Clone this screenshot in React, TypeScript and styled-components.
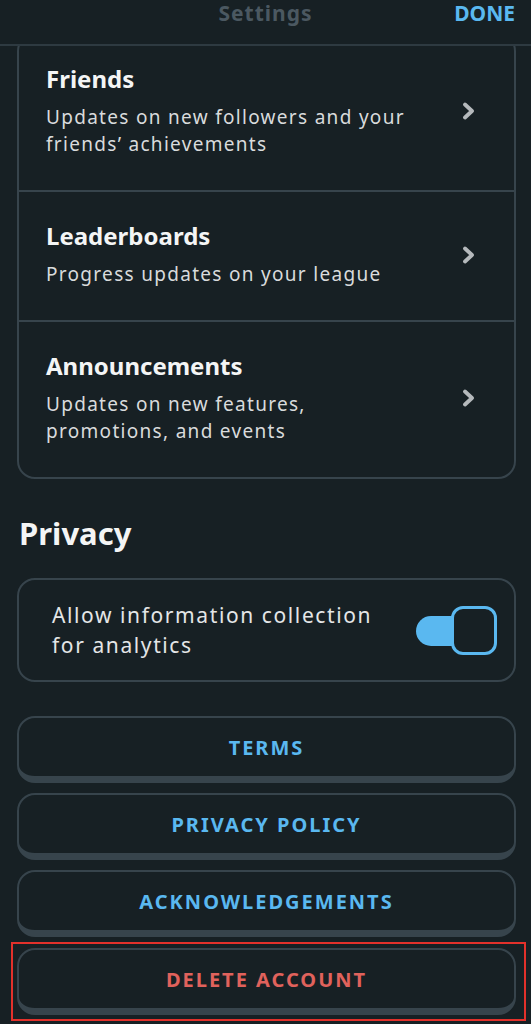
import React from "react";
import styled, { createGlobalStyle } from "styled-components";

const GlobalStyle = createGlobalStyle`
  * { box-sizing: border-box; }
  html, body { margin: 0; padding: 0; background: #172024; }
  body { font-family: "Noto Sans", "Open Sans", sans-serif; color: #f2f3f3; }
`;

const Screen = styled.div`
  width: 531px;
  height: 1024px;
  overflow: hidden;
  display: flex;
  flex-direction: column;
  background: #172024;
`;

const TopBar = styled.div`
  position: relative;
  z-index: 2;
  height: 46px;
  flex-shrink: 0;
  display: grid;
  grid-template-columns: 1fr auto 1fr;
  align-items: start;
  padding: 2px 16px 0;
  background: #172024;
  border-bottom: 2px solid #2e3a41;
`;

const BarTitle = styled.div`
  grid-column: 2;
  font-size: 21px;
  line-height: 22px;
  font-weight: 700;
  letter-spacing: 1px;
  color: #4b5861;
`;

const DoneButton = styled.div`
  grid-column: 3;
  justify-self: end;
  font-size: 21px;
  line-height: 22px;
  font-weight: 700;
  color: #5ab8f0;
`;

const Content = styled.div`
  flex: 1;
  overflow: hidden;
  display: flex;
  flex-direction: column;
  padding: 0 15px 0 17px;
`;

const Card = styled.div`
  margin-top: -13px;
  border: 2px solid #37444c;
  border-radius: 18px;
`;

const Row = styled.div`
  display: flex;
  align-items: center;
  padding: 29px 38px 32px 27px;
  & + & {
    border-top: 2px solid #37444c;
  }
`;

const RowText = styled.div`
  flex: 1;
  display: flex;
  flex-direction: column;
  gap: 10px;
`;

const RowTitle = styled.div`
  font-size: 24px;
  line-height: 30px;
  font-weight: 700;
  color: #f4f5f5;
`;

const RowDesc = styled.div`
  font-size: 19px;
  line-height: 27px;
  letter-spacing: 1.3px;
  white-space: nowrap;
  color: #d9dbdc;
`;

const SectionTitle = styled.h2`
  margin: 35px 0 26px 2px;
  font-size: 31px;
  line-height: 38px;
  font-weight: 700;
  color: #f4f5f5;
`;

const ToggleCard = styled.div`
  display: flex;
  align-items: center;
  justify-content: space-between;
  padding: 20px 17px 20px 33px;
  border: 2px solid #37444c;
  border-radius: 18px;
`;

const ToggleLabel = styled.div`
  font-size: 21px;
  line-height: 30px;
  letter-spacing: 1.6px;
  white-space: nowrap;
  color: #e4e6e7;
`;

const Switch = styled.div`
  position: relative;
  width: 81px;
  height: 49px;
`;

const SwitchTrack = styled.div`
  position: absolute;
  left: 0;
  top: 10px;
  width: 60px;
  height: 30px;
  border-radius: 15px;
  background: #5ab8f0;
`;

const SwitchKnob = styled.div`
  position: absolute;
  right: 0;
  top: 0;
  width: 46px;
  height: 49px;
  border: 3px solid #5ab8f0;
  border-radius: 12px;
  background: #172024;
`;

const ButtonList = styled.div`
  margin-top: 34px;
  display: flex;
  flex-direction: column;
  gap: 10px;
`;

const ActionButton = styled.div<{ $danger?: boolean }>`
  height: 67px;
  display: flex;
  align-items: center;
  justify-content: center;
  border: 2px solid #37444c;
  border-bottom-width: 7px;
  border-radius: 18px;
  font-size: 20px;
  font-weight: 700;
  letter-spacing: 2px;
  color: ${(p) => (p.$danger ? "#e0625c" : "#5ab8f0")};
`;

const DangerFrame = styled.div`
  margin: -5px -10px 0 -6px;
  padding: 4px 8px 4px 4px;
  border: 2px solid #e3312b;
`;

const Chevron = () => (
  <svg width="14" height="18" viewBox="0 0 14 18">
    <polyline
      points="3,2.5 10,9 3,15.5"
      fill="none"
      stroke="#b5b9bc"
      strokeWidth="3.8"
      strokeLinecap="round"
      strokeLinejoin="round"
    />
  </svg>
);

const notifications = [
  { title: "Friends", lines: ["Updates on new followers and your", "friends’ achievements"] },
  { title: "Leaderboards", lines: ["Progress updates on your league"] },
  { title: "Announcements", lines: ["Updates on new features,", "promotions, and events"] },
];

export default function App() {
  return (
    <Screen>
      <GlobalStyle />
      <TopBar>
        <BarTitle>Settings</BarTitle>
        <DoneButton>DONE</DoneButton>
      </TopBar>
      <Content>
        <Card>
          {notifications.map((n) => (
            <Row key={n.title}>
              <RowText>
                <RowTitle>{n.title}</RowTitle>
                <RowDesc>
                  {n.lines.map((l, i) => (
                    <div key={i}>{l}</div>
                  ))}
                </RowDesc>
              </RowText>
              <Chevron />
            </Row>
          ))}
        </Card>

        <SectionTitle>Privacy</SectionTitle>
        <ToggleCard>
          <ToggleLabel>
            Allow information collection
            <br />
            for analytics
          </ToggleLabel>
          <Switch>
            <SwitchTrack />
            <SwitchKnob />
          </Switch>
        </ToggleCard>

        <ButtonList>
          <ActionButton>TERMS</ActionButton>
          <ActionButton>PRIVACY POLICY</ActionButton>
          <ActionButton>ACKNOWLEDGEMENTS</ActionButton>
          <DangerFrame>
            <ActionButton $danger>DELETE ACCOUNT</ActionButton>
          </DangerFrame>
        </ButtonList>
      </Content>
    </Screen>
  );
}
